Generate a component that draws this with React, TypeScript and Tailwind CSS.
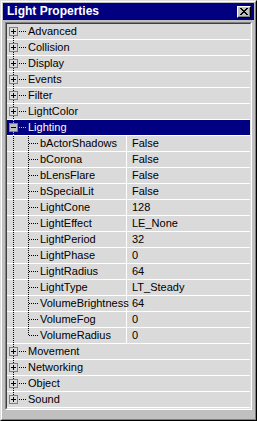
import React from 'react';

const font = "font-['Liberation_Sans',Arial,sans-serif]";

const groupsBefore = ['Advanced', 'Collision', 'Display', 'Events', 'Filter', 'LightColor'];
const groupsAfter = ['Movement', 'Networking', 'Object', 'Sound'];

const lightProps: [string, string][] = [
  ['bActorShadows', 'False'],
  ['bCorona', 'False'],
  ['bLensFlare', 'False'],
  ['bSpecialLit', 'False'],
  ['LightCone', '128'],
  ['LightEffect', 'LE_None'],
  ['LightPeriod', '32'],
  ['LightPhase', '0'],
  ['LightRadius', '64'],
  ['LightType', 'LT_Steady'],
  ['VolumeBrightness', '64'],
  ['VolumeFog', '0'],
  ['VolumeRadius', '0'],
];

// dotted line helpers, one pixel on / one pixel off
const vDots = (x: number, from: number, to: number) => {
  const out: React.ReactNode[] = [];
  for (let y = from; y < to; y++) if (y % 2 === 0) out.push(<rect key={`v${x}-${y}`} x={x} y={y} width={1} height={1} />);
  return out;
};
const hDots = (y: number, from: number, to: number) => {
  const out: React.ReactNode[] = [];
  for (let x = from; x < to; x++) if (x % 2 === 0) out.push(<rect key={`h${y}-${x}`} x={x} y={y} width={1} height={1} />);
  return out;
};

function GroupTree({ first, last, open, selected }: { first: boolean; last: boolean; open: boolean; selected: boolean }) {
  return (
    <svg width={21} height={15} shapeRendering="crispEdges" className="flex-none">
      <g fill={selected ? '#c0c0c0' : '#000'}>
        {vDots(6, first ? 7 : 0, last ? 8 : 15)}
        {hDots(7, 11, 20)}
      </g>
      <rect x={2.5} y={3.5} width={8} height={8} fill={selected ? '#c0c0c0' : '#dadada'} stroke="#808080" />
      <rect x={4} y={7} width={5} height={1} fill="#000" />
      {!open && <rect x={6} y={5} width={1} height={5} fill="#000" />}
    </svg>
  );
}

function PropTree({ last }: { last: boolean }) {
  return (
    <svg width={33} height={15} shapeRendering="crispEdges" className="flex-none">
      <g fill="#000">
        {vDots(6, 0, 15)}
        {vDots(21, 0, last ? 8 : 15)}
        {hDots(7, 22, 32)}
      </g>
    </svg>
  );
}

function GroupRow({ label, first = false, last = false, open = false, selected = false }: { label: string; first?: boolean; last?: boolean; open?: boolean; selected?: boolean }) {
  return (
    <div className={`flex h-[16px] border-b border-white ${selected ? 'bg-[#000080] text-white' : 'text-black'}`}>
      <GroupTree first={first} last={last} open={open} selected={selected} />
      <span className="leading-[15px] whitespace-nowrap">{label}</span>
    </div>
  );
}

function PropRow({ name, value, last }: { name: string; value: string; last: boolean }) {
  return (
    <div className="flex h-[16px] border-b border-white text-black">
      <div className="flex w-[120px] flex-none border-r border-white">
        <PropTree last={last} />
        <span className="leading-[15px] whitespace-nowrap">{name}</span>
      </div>
      <span className="pl-[5px] leading-[15px] whitespace-nowrap">{value}</span>
    </div>
  );
}

function CloseGlyph() {
  const rows = ['XX....XX', '.XX..XX.', '..XXXX..', '...XX...', '..XXXX..', '.XX..XX.', 'XX....XX'];
  return (
    <svg width={8} height={7} shapeRendering="crispEdges">
      {rows.flatMap((r, y) =>
        r.split('').map((c, x) => (c === 'X' ? <rect key={`${x}-${y}`} x={x} y={y} width={1} height={1} fill="#000" /> : null))
      )}
    </svg>
  );
}

export default function App() {
  return (
    <div className={`w-[257px] h-[421px] border border-t-[#dfdfdf] border-l-[#dfdfdf] border-r-black border-b-black ${font} text-[11px]`}>
      <div className="h-full border border-t-white border-l-white border-r-[#808080] border-b-[#808080] bg-[#c0c0c0] p-[1px] flex flex-col">
        <div className="h-[17px] bg-[#000080] flex items-center justify-between pl-[4px] pr-[3px]">
          <span className="text-white font-bold text-[12px] leading-[17px]">Light Properties</span>
          <div className="w-[14px] h-[12px] border border-t-white border-l-white border-r-black border-b-black">
            <div className="h-full border border-t-[#c0c0c0] border-l-[#c0c0c0] border-r-[#808080] border-b-[#808080] bg-[#c0c0c0] flex items-center justify-center">
              <CloseGlyph />
            </div>
          </div>
        </div>
        <div className="mt-[2px] mx-[2px] border border-t-[#808080] border-l-[#808080] border-r-white border-b-white">
          <div className="border border-t-[#404040] border-l-[#404040] border-r-[#dfdfdf] border-b-[#dfdfdf] bg-[#dadada]">
            {groupsBefore.map((g, i) => (
              <GroupRow key={g} label={g} first={i === 0} />
            ))}
            <GroupRow label="Lighting" open selected />
            {lightProps.map(([n, v], i) => (
              <PropRow key={n} name={n} value={v} last={i === lightProps.length - 1} />
            ))}
            {groupsAfter.map((g, i) => (
              <GroupRow key={g} label={g} last={i === groupsAfter.length - 1} />
            ))}
          </div>
        </div>
      </div>
    </div>
  );
}
